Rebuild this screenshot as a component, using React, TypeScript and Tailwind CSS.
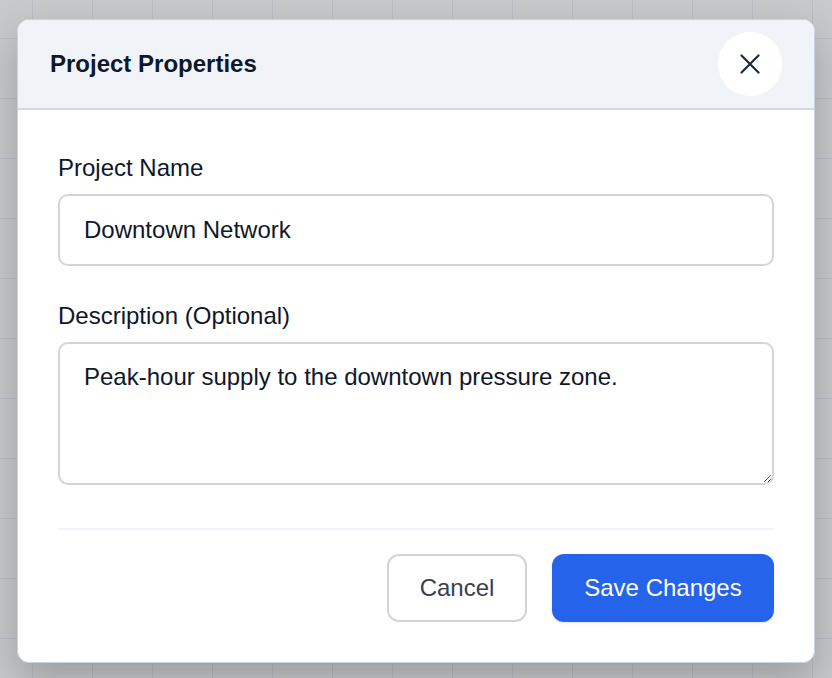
import { useState } from 'react'

function CloseIcon() {
  return (
    <svg width="20" height="20" viewBox="0 0 20 20" fill="none" aria-hidden="true">
      <path d="M1.5 1.5L18.5 18.5M18.5 1.5L1.5 18.5" stroke="#1e293b" strokeWidth="2.2" strokeLinecap="round" />
    </svg>
  )
}

export default function App() {
  const [name, setName] = useState('Downtown Network')
  const [description, setDescription] = useState(
    'Peak-hour supply to the downtown pressure zone.'
  )

  return (
    <div className="min-h-[678px] w-full bg-[#c8c9cb] bg-[image:linear-gradient(to_right,#b9bdc4_1px,transparent_1px),linear-gradient(to_bottom,#b9bdc4_1px,transparent_1px)] bg-[size:60px_60px] bg-[position:32px_38px] pl-[17px] pt-[19px] font-['Liberation_Sans',Arial,sans-serif]">
      <div className="w-[798px] overflow-hidden rounded-xl border border-[#c9d3df] bg-white shadow-[0_18px_40px_rgba(0,0,0,0.22)]">
        {/* Header */}
        <div className="flex items-center justify-between border-b-2 border-[#cfd8e4] bg-[#f0f4f9] px-8 py-3">
          <h2 className="text-[24px] leading-9 font-bold text-[#0f172a]">Project Properties</h2>
          <button className="flex h-16 w-16 items-center justify-center rounded-full bg-white">
            <CloseIcon />
          </button>
        </div>

        {/* Body */}
        <div className="px-10 pt-10 pb-10">
          <label className="mb-2 block text-[24px] leading-9 text-[#0f172a]">Project Name</label>
          <input
            value={name}
            onChange={(e) => setName(e.target.value)}
            className="block h-[72px] w-full rounded-[10px] border-2 border-[#d1d5db] bg-white px-6 text-[24px] leading-9 text-[#0f172a] outline-none"
          />

          <label className="mt-8 mb-2 block text-[24px] leading-9 text-[#0f172a]">
            Description (Optional)
          </label>
          <textarea
            value={description}
            onChange={(e) => setDescription(e.target.value)}
            className="block h-[143px] w-full rounded-[10px] border-2 border-[#d1d5db] bg-white px-6 py-[15px] text-[24px] leading-9 text-[#0f172a] outline-none"
          />

          <div className="mt-[43px] h-[2px] bg-[#f1f5f9]" />

          {/* Footer */}
          <div className="flex justify-end gap-[25px] pt-6">
            <button className="h-[68px] w-[140px] rounded-xl border-2 border-[#d1d5db] bg-white text-[24px] text-[#374151]">
              Cancel
            </button>
            <button className="h-[68px] w-[222px] rounded-xl bg-[#2563eb] text-[24px] text-white shadow-sm">
              Save Changes
            </button>
          </div>
        </div>
      </div>
    </div>
  )
}
